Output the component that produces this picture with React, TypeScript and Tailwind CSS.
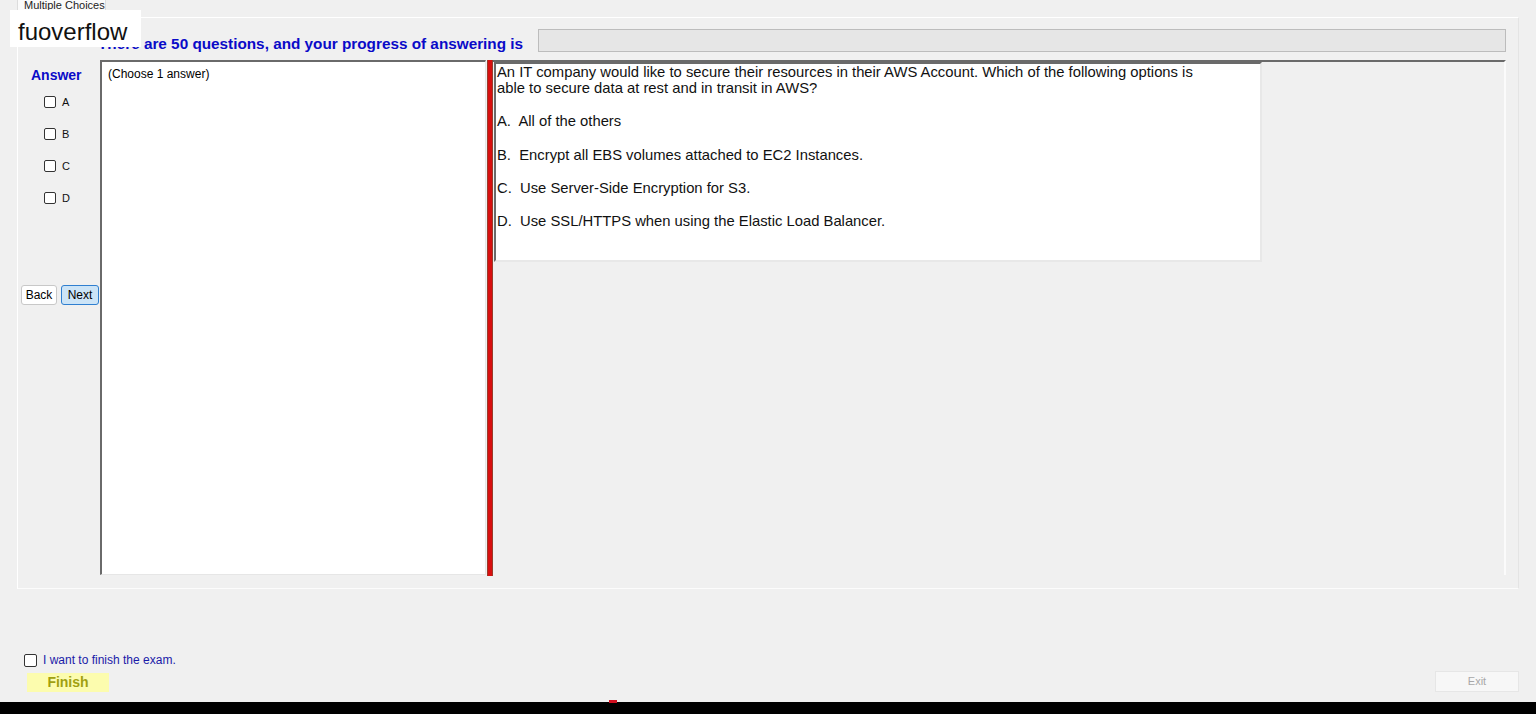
import React from 'react';

const options = [
  'A.  All of the others',
  'B.  Encrypt all EBS volumes attached to EC2 Instances.',
  'C.  Use Server-Side Encryption for S3.',
  'D.  Use SSL/HTTPS when using the Elastic Load Balancer.',
];

const Box: React.FC<{ label: string }> = ({ label }) => (
  <label className="flex items-center gap-[6px] h-[14px]">
    <span className="w-[12px] h-[12px] border border-[#333] rounded-[2px] bg-white" />
    <span className="text-[11px] text-[#111]">{label}</span>
  </label>
);

export default function App() {
  return (
    <div className="relative w-[1536px] h-[714px] overflow-hidden bg-[#f0f0f0] flex flex-col font-['Liberation_Sans',Arial,sans-serif] text-black">
      {/* Tab header */}
      <div className="h-[17px] pl-[17px] flex">
        <div className="w-[89px] h-[17px] bg-[#fafafa] border border-t-0 border-[#dcdcdc] overflow-hidden">
          <div className="-mt-[3px] pl-[6px] text-[11px] text-[#222] whitespace-nowrap">Multiple Choices</div>
        </div>
      </div>

      {/* Tab page */}
      <div className="ml-[17px] w-[1502px] h-[572px] border border-white border-r-[#e4e4e4] border-b-[#fcfcfc] flex flex-col">
        {/* Title row */}
        <div className="h-[42px] flex items-start pt-[11px]">
          <div className="w-[520px] pl-[80px] text-[15.3px] font-bold text-[#0a0ac8] whitespace-nowrap leading-[22px] pt-[4px]">
            There are 50 questions, and your progress of answering is
          </div>
          <div className="w-[968px] h-[23px] bg-[#e6e6e6] border border-[#bcbcbc]" />
        </div>

        {/* Main row */}
        <div className="h-[515px] flex">
          {/* Answer column */}
          <div className="w-[82px] flex flex-col">
            <div className="pt-[8px] pl-[13px] text-[14px] font-bold text-[#0a0ac8] leading-[14px]">Answer</div>
            <div className="pl-[26px] pt-[13px] flex flex-col gap-[18px]">
              <Box label="A" />
              <Box label="B" />
              <Box label="C" />
              <Box label="D" />
            </div>
            <div className="mt-[80px] pl-[3px] flex gap-[4px]">
              <button className="w-[36px] h-[20px] bg-white border border-[#c8c8c8] rounded-[3px] text-[12px] leading-none">Back</button>
              <button className="w-[38px] h-[20px] bg-[#cce4f7] border border-[#2f7fd0] rounded-[3px] text-[12px] leading-none">Next</button>
            </div>
          </div>

          {/* Answer textbox */}
          <div className="w-[386px] h-[515px] bg-white border-t-2 border-l-2 border-[#6a6a6a] border-r border-b border-r-[#e6e6e6] border-b-[#e6e6e6] pl-[6px] pt-[5px]">
            <div className="text-[12px] leading-[15px]">(Choose 1 answer)</div>
          </div>

          {/* Splitter */}
          <div className="ml-[1px] w-[6px] h-[516px] bg-[#d80f0f] border-x border-[#9a3a2a]" />

          {/* Question area */}
          <div className="w-[1013px] h-[515px] border-t-2 border-[#6a6a6a] border-r-2 border-r-[#fbfbfb] pl-[1px]">
            <div className="w-[768px] h-[200px] bg-white border-t-2 border-l-2 border-[#6a6a6a] border-r-2 border-b-2 border-r-[#e8e8e8] border-b-[#e8e8e8] pl-[1px] text-[14.8px] leading-[16px] text-[#111]">
              <div>
                An IT company would like to secure their resources in their AWS Account. Which of the following options is
                <br />
                able to secure data at rest and in transit in AWS?
              </div>
              <div className="mt-[17px] flex flex-col gap-[17px]">
                {options.map((o, i) => (
                  <div key={o} className={i === 0 ? 'whitespace-pre mb-[1px]' : 'whitespace-pre'}>{o}</div>
                ))}
              </div>
            </div>
          </div>
        </div>
      </div>

      {/* Bottom */}
      <div className="flex-1 flex flex-col">
        <div className="mt-[64px] pl-[24px] flex items-center gap-[6px] h-[14px]">
          <span className="w-[13px] h-[13px] border border-[#333] rounded-[2px] bg-white" />
          <span className="text-[12px] text-[#1a1aa8]">I want to finish the exam.</span>
        </div>
        <div className="mt-[4px] flex justify-between items-start pr-[17px]">
          <div className="ml-[27px] mt-[2px] w-[82px] h-[19px] bg-[#fcfcae] flex items-center justify-center text-[14px] font-bold text-[#a0a010]">
            Finish
          </div>
          <div className="w-[84px] h-[21px] bg-[#f7f7f7] border border-[#e6e6e6] flex items-center justify-center text-[11px] text-[#a8a8a8]">
            Exit
          </div>
        </div>
      </div>
      <div className="h-[12px] bg-black relative">
        <div className="absolute left-[609px] top-[-2px] w-[8px] h-[3px] bg-[#d01020]" />
      </div>

      {/* Watermark overlay */}
      <div className="absolute left-[10px] top-[10px] w-[131px] h-[37px] bg-white pl-[8px] pt-[3px] text-[24px] leading-[37px] text-[#111]">
        fuoverflow
      </div>
    </div>
  );
}
